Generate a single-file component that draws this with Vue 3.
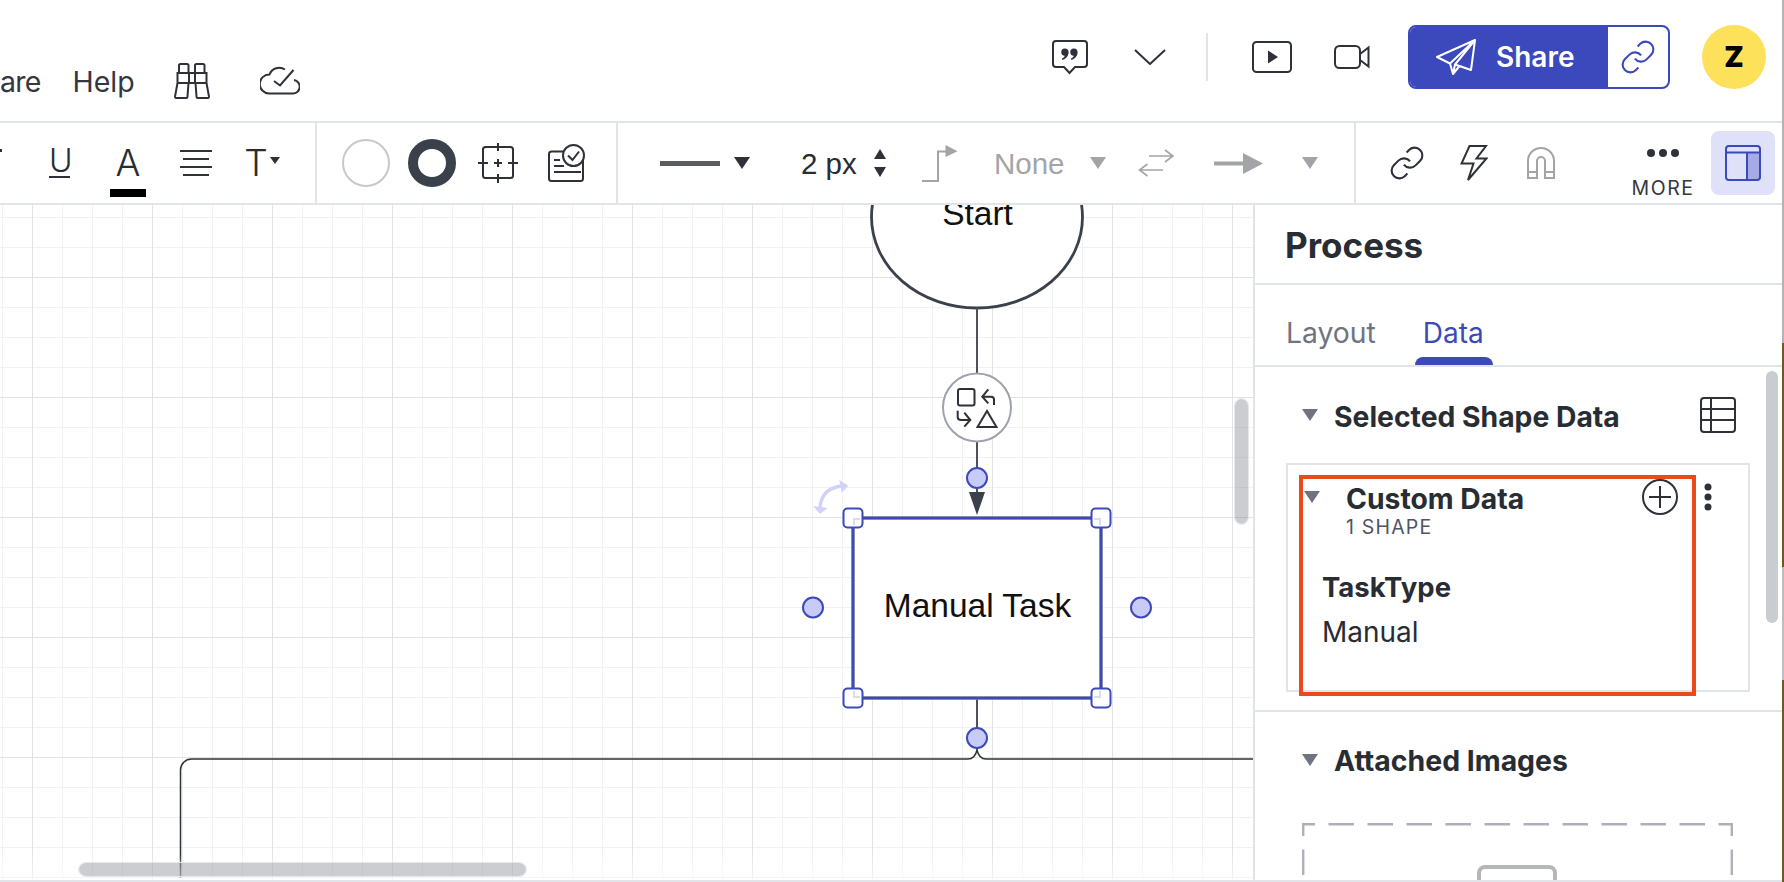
<template>
  <div class="app">
    <div class="content">
      <header class="topbar">
        <nav class="menu">
          <span class="menu-item cut">are</span>
          <span class="menu-item help">Help</span>
          <svg class="binoculars" width="36" height="36" viewBox="0 0 36 36">
            <path d="M5 10V2.500A1.500 1.500 0 0 1 6.500 1H13a1.500 1.500 0 0 1 1.500 1.500V10M21 10V2.500A1.500 1.500 0 0 1 22.500 1H29a1.500 1.500 0 0 1 1.500 1.500V10M3.500 10H32.500V20H3.500ZM15 10V20M21 10V20M3.500 20L1 33.500A1.500 1.500 0 0 0 2.500 35H12a1.500 1.500 0 0 0 1.500-1.500L14.500 20M21.500 20L22.500 33.500A1.500 1.500 0 0 0 24 35H33.500A1.500 1.500 0 0 0 35 33.500L32.500 20" />
          </svg>
          <svg class="cloud" width="40" height="29" viewBox="0 0 40 29">
            <path d="M25 3.500A10.500 10.500 0 0 0 9.500 8.500A9.200 9.200 0 0 0 9 27.500H32.500A6.800 6.800 0 0 0 34 14M14 15L20 19.500L33.500 4" />
          </svg>
        </nav>
        <div class="actions">
          <svg class="comment" width="36" height="35" viewBox="0 0 36 35">
            <path class="line" d="M4 1H32a3 3 0 0 1 3 3V24a3 3 0 0 1-3 3H23L17.500 33L12 27H4a3 3 0 0 1-3-3V4a3 3 0 0 1 3-3Z" />
            <path class="solid" d="M13 8.500a3.600 3.600 0 0 1 3.600 3.800c0 3.600-2.600 6.500-6.200 7.700l-.6-1.200c1.800-.9 2.800-2 3-3a3.600 3.600 0 0 1 .2-7.300ZM22 8.500a3.600 3.600 0 0 1 3.600 3.800c0 3.600-2.600 6.500-6.200 7.700l-.6-1.200c1.800-.9 2.800-2 3-3a3.600 3.600 0 0 1 .2-7.300Z" />
          </svg>
          <svg class="chevron" width="32" height="16" viewBox="0 0 32 16">
            <path class="line" d="M1 1L16 15L31 1" />
          </svg>
          <span class="divider"></span>
          <svg class="play" width="40" height="32" viewBox="0 0 40 32">
            <rect class="line" x="1" y="1" width="38" height="30" rx="3.500" />
            <path class="solid" d="M16 9.500L26 16L16 22.500Z" />
          </svg>
          <svg class="video" width="36" height="24" viewBox="0 0 36 24">
            <rect class="line" x="1" y="1" width="25" height="22" rx="4.500" />
            <path class="line" d="M26 9L34.500 2.500V21.500L26 15" />
          </svg>
          <div class="share">
            <div class="share-main">
              <svg width="40" height="36" viewBox="0 0 40 36">
                <path d="M39 1L1 18L14 24.500L17 35L23.500 27L35 31ZM39 1L14 24.500M39 1L19 25.500L35 31M19 25.500L17 35" />
              </svg>
              <span>Share</span>
            </div>
            <div class="share-link">
              <svg width="34" height="34" viewBox="1 1 22 22">
                <path :d="linkPath" />
              </svg>
            </div>
          </div>
          <div class="avatar">Z</div>
        </div>
      </header>

      <div class="toolbar">
        <div class="tool-group text-group">
          <span class="stub"></span>
          <span class="glyph-u">U</span>
          <div class="font-color">
            <span class="glyph-a">A</span>
            <span class="color-bar"></span>
          </div>
          <svg class="align" width="32" height="26" viewBox="0 0 32 26">
            <path class="line" d="M0 1H32M3 9H29M0 17H32M3 25H29" />
          </svg>
          <span class="glyph-t">T</span>
          <span class="caret-small"></span>
        </div>
        <div class="tool-group shape-group">
          <span class="fill-swatch"></span>
          <span class="stroke-swatch"></span>
          <svg class="target" width="40" height="40" viewBox="0 0 40 40">
            <rect class="line" x="5" y="4" width="30" height="31" rx="2.500" />
            <path class="line" d="M20 0V8M20 31V40M0 20H10M30 20H40M16 20H24M20 16V24" />
          </svg>
          <svg class="checklist" width="38" height="38" viewBox="0 0 38 38">
            <rect class="line" x="1" y="7.500" width="34" height="29.500" rx="2.500" />
            <path class="line" d="M6 16H12M6 22H16M6 28H33" />
            <circle class="line white" cx="25.500" cy="11.500" r="10.500" />
            <path class="line" d="M20 11.500L24.500 16L31 7.500" />
          </svg>
        </div>
        <div class="tool-group line-group">
          <span class="line-sample"></span>
          <span class="caret dark"></span>
          <span class="size-value">2 px</span>
          <div class="stepper">
            <span class="step-up"></span>
            <span class="step-down"></span>
          </div>
          <svg class="elbow" width="36" height="37" viewBox="0 0 36 37">
            <path class="muted-line" d="M0 36H16V6.500H24" />
            <path class="muted-fill" d="M23.500 0L35.500 6.300L23.500 12Z" />
          </svg>
          <span class="none-value">None</span>
          <span class="caret none-caret"></span>
          <svg class="swap" width="36" height="28" viewBox="0 0 36 28">
            <path class="muted-line thin" d="M11 7H35M27 1L35 7L27 13M25 21H1.500M9.500 15L1.500 21L9.500 27" />
          </svg>
          <svg class="arrow" width="50" height="21" viewBox="0 0 50 21">
            <path class="muted-fill" d="M0 8.500H29V0L49 10.500L29 21V12.500H0Z" />
          </svg>
          <span class="caret arrow-caret"></span>
        </div>
        <div class="tool-group extra-group">
          <svg class="link-tool" width="34" height="34" viewBox="1 1 22 22">
            <path class="link-line" :d="linkPath" />
          </svg>
          <svg class="bolt" width="28" height="37" viewBox="0 0 28 37">
            <path class="line" d="M9.500 1H26L16.500 13.500H26.500L8 35L13.500 18.500H1.500Z" />
          </svg>
          <svg class="magnet" width="28" height="32" viewBox="0 0 28 32">
            <path class="muted-line" d="M1 31V14A13 13 0 0 1 27 14V31H18V14A4 4 0 0 0 10 14V31ZM1 25H10M18 25H27" />
          </svg>
          <div class="more">
            <svg width="32" height="8" viewBox="0 0 32 8">
              <circle class="solid" cx="4" cy="4" r="4" />
              <circle class="solid" cx="16" cy="4" r="4" />
              <circle class="solid" cx="28" cy="4" r="4" />
            </svg>
            <span>MORE</span>
          </div>
          <div class="panel-toggle">
            <svg width="36" height="36" viewBox="0 0 36 36">
              <path class="panel-fill" d="M22 7H35V33a2 2 0 0 1-2 2H22Z" />
              <rect class="panel-line" x="1" y="1" width="34" height="34" rx="3" />
              <path class="panel-line" d="M1 7.500H35M22 7.500V35" />
            </svg>
          </div>
        </div>
      </div>

      <main class="workspace">
        <section class="canvas">
          <svg class="diagram" width="1253" height="675" viewBox="0 205 1253 675">
            <path class="connector" d="M180.500 878V770A11 11 0 0 1 191.500 759H968Q975 759 977 750Q979 759 986 759H1253" />
            <ellipse class="shape-outline" cx="977" cy="217" rx="105.500" ry="91" />
            <text class="shape-text" x="977.500" y="225">Start</text>
            <path class="stem" d="M977 308V373M977 442V492M977 698V750" />
            <path class="arrow-head" d="M969 492H985L977 515Z" />
            <circle class="swap-circle" cx="977" cy="407.500" r="34" />
            <rect class="swap-icon" x="958" y="389" width="16.500" height="16.500" rx="2" />
            <path class="swap-icon" d="M994 405V399.500Q994 396.700 991 396.700H983M988.300 389.300L982.300 396.700L988.300 403.300M957.700 410.700V417Q957.700 420 961 420H969.500M964.300 412.700L970.300 420L964.300 426.700M987 411L996.500 427H977.500Z" />
            <rect class="task-box" x="853" y="518" width="248" height="180" />
            <rect class="task-select" x="853" y="518" width="248" height="180" />
            <text class="shape-text" x="977.500" y="616.500">Manual Task</text>
            <path class="rotate-arc" d="M820 507Q822 488 842 486" />
            <path class="rotate-head" d="M813 506L827.700 508L820 514ZM839.300 480L848.300 485.700L841.700 492.700Z" />
            <g v-for="h in handles" :key="h.x + '-' + h.y">
              <rect class="handle" :x="h.x - 9.500" :y="h.y - 9.500" width="19" height="19" rx="4" />
              <path class="handle-corner" :d="cornerPath(h)" />
            </g>
            <circle v-for="p in ports" :key="p.x + '-' + p.y" class="port" :cx="p.x" :cy="p.y" r="10" />
          </svg>
          <div class="canvas-fade"></div>
          <div class="scroll-v"></div>
          <div class="scroll-h"></div>
        </section>

        <aside class="sidebar">
          <h1 class="panel-title">Process</h1>
          <div class="tabs">
            <span class="tab">Layout</span>
            <span class="tab active">Data</span>
          </div>
          <div class="panel-body">
            <section class="shape-data">
              <div class="section-head">
                <span class="disclosure"></span>
                <h2>Selected Shape Data</h2>
                <svg class="table-icon" width="36" height="36" viewBox="0 0 36 36">
                  <rect class="line" x="1" y="1" width="34" height="34" rx="3" />
                  <path class="line" d="M1 12H35M1 23H35M11 1V35" />
                </svg>
              </div>
              <div class="data-card">
                <div class="card-head">
                  <span class="disclosure"></span>
                  <div class="card-title">
                    <strong>Custom Data</strong>
                    <small>1 SHAPE</small>
                  </div>
                  <svg class="add-icon" width="36" height="36" viewBox="0 0 36 36">
                    <circle class="line" cx="18" cy="18" r="17" />
                    <path class="line" d="M18 7V29M7 18H29" />
                  </svg>
                  <svg class="kebab" width="8" height="28" viewBox="0 0 8 28">
                    <circle class="solid" cx="4" cy="4" r="3.500" />
                    <circle class="solid" cx="4" cy="14" r="3.500" />
                    <circle class="solid" cx="4" cy="24" r="3.500" />
                  </svg>
                </div>
                <div class="field-name">TaskType</div>
                <div class="field-value">Manual</div>
                <div class="callout"></div>
              </div>
            </section>
            <section class="images">
              <div class="section-head">
                <span class="disclosure"></span>
                <h2>Attached Images</h2>
              </div>
              <div class="dropzone">
                <svg class="dash" width="431" height="60" viewBox="0 0 431 60">
                  <path d="M0 1.200H431M1.200 0V60M429.800 0V60" />
                </svg>
                <div class="image-icon"></div>
              </div>
            </section>
            <div class="scroll-panel"></div>
          </div>
        </aside>
      </main>
    </div>
    <div class="window-edge"></div>
  </div>
</template>

<script setup>
const linkPath =
  'M10 13a5 5 0 0 0 7.540.540l3-3a5 5 0 0 0-7.070-7.070l-1.720 1.710M14 11a5 5 0 0 0-7.540-.540l-3 3a5 5 0 0 0 7.070 7.070l1.710-1.710'

const handles = [
  { x: 853, y: 518, sx: 1, sy: 1 },
  { x: 1101, y: 518, sx: -1, sy: 1 },
  { x: 853, y: 698, sx: 1, sy: -1 },
  { x: 1101, y: 698, sx: -1, sy: -1 },
]

const ports = [
  { x: 977, y: 478 },
  { x: 813, y: 607.5 },
  { x: 1141, y: 607.5 },
  { x: 977, y: 738 },
]

// the grey corner of the shape that shows through each handle
const cornerPath = (h) => {
  const x = h.x + h.sx
  const y = h.y + h.sy
  return `M${x + h.sx * 6} ${y}H${x}V${y + h.sy * 6}`
}
</script>

<style>
html,
body {
  margin: 0;
  background: #fff;
}
</style>

<style scoped>
.app {
  width: 1784px;
  height: 882px;
  overflow: hidden;
  display: flex;
  font-family: Inter, "Liberation Sans", sans-serif;
  color: #282c33;
  background: #fff;
}
.content {
  width: 1782px;
  flex: none;
  display: flex;
  flex-direction: column;
}
.window-edge {
  flex: 1;
  background: linear-gradient(
    to bottom,
    #b4b4b4 0,
    #b4b4b4 343px,
    #6f5a1e 343px,
    #6f5a1e 567px,
    #bdbdbd 567px,
    #bdbdbd 680px,
    #6f5a1e 680px,
    #6f5a1e 882px
  );
}

svg {
  display: block;
  flex: none;
  fill: none;
}
.line {
  fill: none;
  stroke: #2e3138;
  stroke-width: 2;
}
.line.white {
  fill: #fff;
}
.solid {
  fill: #2e3138;
}
.muted-line {
  fill: none;
  stroke: #a3a4a8;
  stroke-width: 2;
}
.muted-line.thin {
  stroke-width: 1.6;
}
.muted-fill {
  fill: #a3a4a8;
}
.link-line {
  fill: none;
  stroke: #2e3138;
  stroke-width: 1.350;
}

/* top bar */
.topbar {
  height: 121px;
  flex: none;
  display: flex;
  justify-content: space-between;
  align-items: flex-start;
  border-bottom: 2px solid #e1e4e8;
}
.menu {
  display: flex;
  align-items: center;
  height: 38px;
  margin-top: 62px;
}
.menu-item {
  font-size: 28.500px;
  line-height: 38px;
  margin-top: 2px;
  color: #33373e;
}
.cut {
  letter-spacing: -0.8px;
}
.help {
  margin-left: 32px;
}
.binoculars {
  margin-left: 39px;
}
.binoculars path,
.cloud path {
  stroke: #2e3138;
  stroke-width: 2;
}
.cloud {
  margin-left: 50px;
  margin-top: -1px;
}
.actions {
  display: flex;
  align-items: center;
  height: 64px;
  padding: 25px 16px 0 0;
}
.chevron {
  margin-left: 46px;
}
.divider {
  width: 2px;
  height: 48px;
  margin-left: 40px;
  background: #e1e4e8;
}
.play {
  margin-left: 44px;
}
.video {
  margin-left: 42px;
}
.share {
  display: flex;
  width: 262px;
  height: 64px;
  margin-left: 38px;
  box-sizing: border-box;
  border: 2px solid #3b49bd;
  border-radius: 8px;
  overflow: hidden;
}
.share-main {
  width: 198px;
  display: flex;
  align-items: center;
  padding-left: 26px;
  box-sizing: border-box;
  background: #3b49bd;
  color: #fff;
  font-size: 28px;
  font-weight: 600;
}
.share-main svg path {
  stroke: #fff;
  stroke-width: 2;
  stroke-linejoin: round;
}
.share-main span {
  margin-left: 20px;
}
.share-link {
  flex: 1;
  display: flex;
  align-items: center;
  padding-left: 13px;
}
.share-link path {
  fill: none;
  stroke: #3b49bd;
  stroke-width: 1.350;
}
.avatar {
  width: 64px;
  height: 64px;
  margin-left: 32px;
  border-radius: 50%;
  background: #fde15a;
  color: #000;
  font-size: 28px;
  font-weight: 900;
  line-height: 64px;
  text-align: center;
}

/* toolbar */
.toolbar {
  height: 80px;
  flex: none;
  display: flex;
  border-bottom: 2px solid #e1e4e8;
}
.tool-group {
  display: flex;
  align-items: center;
  box-sizing: border-box;
  border-right: 2px solid #e1e4e8;
}
.text-group {
  width: 317px;
}
.stub {
  width: 2px;
  height: 3px;
  margin-top: -25px;
  background: #2e3138;
}
.glyph-u {
  width: 21px;
  height: 30px;
  margin-left: 47px;
  box-sizing: border-box;
  border-bottom: 2px solid #2e3138;
  font-size: 32px;
  font-weight: 300;
  line-height: 26px;
  text-align: center;
}
.font-color {
  width: 36px;
  height: 48px;
  margin: 20px 0 0 40px;
  display: flex;
  flex-direction: column;
  align-items: center;
}
.glyph-a {
  height: 40px;
  font-size: 37px;
  font-weight: 300;
  line-height: 28px;
}
.color-bar {
  width: 36px;
  height: 8px;
  background: #000;
}
.align {
  margin-left: 34px;
}
.glyph-t {
  width: 24px;
  margin-left: 32px;
  font-size: 37px;
  font-weight: 300;
  line-height: 30px;
  text-align: center;
}
.caret-small {
  margin: -6px 0 0 2px;
  border-left: 5px solid transparent;
  border-right: 5px solid transparent;
  border-top: 7px solid #2e3138;
}
.shape-group {
  width: 301px;
}
.fill-swatch {
  width: 48px;
  height: 48px;
  margin-left: 25px;
  box-sizing: border-box;
  border: 2px solid #c8c8c8;
  border-radius: 50%;
}
.stroke-swatch {
  width: 48px;
  height: 48px;
  margin-left: 18px;
  box-sizing: border-box;
  border: 10px solid #3a414a;
  border-radius: 50%;
}
.target {
  margin-left: 22px;
}
.checklist {
  margin-left: 30px;
}
.line-group {
  width: 738px;
}
.line-sample {
  width: 60px;
  height: 5px;
  margin-left: 42px;
  background: #5a5c60;
}
.caret {
  width: 0;
  border-left: 8px solid transparent;
  border-right: 8px solid transparent;
  border-top: 12px solid #a3a4a8;
}
.caret.dark {
  margin-left: 14px;
  border-top-color: #2e3138;
}
.size-value {
  width: 56px;
  margin: 2px 0 0 51px;
  font-family: "Liberation Sans", Arial, sans-serif;
  font-size: 29.500px;
  white-space: nowrap;
}
.stepper {
  display: flex;
  flex-direction: column;
  gap: 8px;
  margin-left: 17px;
}
.step-up,
.step-down {
  width: 0;
  border-left: 6px solid transparent;
  border-right: 6px solid transparent;
}
.step-up {
  border-bottom: 10px solid #2e3138;
}
.step-down {
  border-top: 10px solid #2e3138;
}
.elbow {
  margin-left: 36px;
}
.none-value {
  width: 70px;
  margin: 2px 0 0 36px;
  font-family: "Liberation Sans", Arial, sans-serif;
  font-size: 29.500px;
  color: #a3a4a8;
}
.none-caret {
  margin-left: 26px;
}
.swap {
  margin-left: 32px;
}
.arrow {
  margin-left: 40px;
  filter: blur(0.6px);
}
.arrow-caret {
  margin-left: 38px;
}
.extra-group {
  flex: 1;
  border-right: 0;
}
.link-tool {
  margin-left: 34px;
}
.bolt {
  margin-left: 36px;
}
.magnet {
  margin-left: 39px;
}
.more {
  width: 60px;
  height: 49px;
  margin: 21px 0 0 78px;
  display: flex;
  flex-direction: column;
  align-items: center;
  font-size: 19.500px;
  letter-spacing: 1.500px;
  color: #33373e;
}
.more span {
  margin-top: 21px;
  line-height: 20px;
}
.panel-toggle {
  width: 64px;
  height: 64px;
  margin-left: 18px;
  display: flex;
  align-items: center;
  justify-content: center;
  border-radius: 8px;
  background: #dfe1f9;
}
.panel-line {
  fill: none;
  stroke: #3b49bd;
  stroke-width: 2;
}
.panel-fill {
  fill: #a6abe6;
}

/* canvas */
.workspace {
  flex: 1;
  display: flex;
  min-height: 0;
  border-bottom: 2px solid #e1e4e8;
}
.canvas {
  position: relative;
  width: 1253px;
  flex: none;
  overflow: hidden;
  background-color: #fff;
  background-image:
    linear-gradient(to right, #e1e2e4 1.500px, transparent 1.500px),
    linear-gradient(to bottom, #e1e2e4 1.500px, transparent 1.500px),
    linear-gradient(to right, #f0f1f2 1.500px, transparent 1.500px),
    linear-gradient(to bottom, #f0f1f2 1.500px, transparent 1.500px);
  background-size: 120px 120px, 120px 120px, 30px 30px, 30px 30px;
  background-position: 32px 0, 0 72px, 2px 0, 0 12px;
}
.diagram {
  position: absolute;
  left: 0;
  top: 0;
}
.connector {
  fill: none;
  stroke: #2e3338;
  stroke-width: 1.500;
}
.shape-outline {
  fill: #fff;
  stroke: #3a414a;
  stroke-width: 2.800;
}
.shape-text {
  fill: #111;
  font-family: "Liberation Sans", Arial, sans-serif;
  font-size: 33.500px;
  text-anchor: middle;
}
.stem {
  fill: none;
  stroke: #4d5259;
  stroke-width: 2;
}
.arrow-head {
  fill: #3a414a;
}
.swap-circle {
  fill: #fff;
  stroke: #9ea2ac;
  stroke-width: 2;
}
.swap-icon {
  fill: none;
  stroke: #2e3138;
  stroke-width: 2;
}
.task-box {
  fill: #fff;
  stroke: #80848c;
  stroke-width: 3.500;
}
.task-select {
  fill: none;
  stroke: #3b49bd;
  stroke-width: 2.400;
}
.rotate-arc {
  fill: none;
  stroke: #d1d2fb;
  stroke-width: 3.500;
}
.rotate-head {
  fill: #d1d2fb;
}
.handle {
  fill: #fff;
  stroke: #3b49bd;
  stroke-width: 2;
}
.handle-corner {
  fill: none;
  stroke: #dcdde6;
  stroke-width: 2;
}
.port {
  fill: #c9cbf7;
  stroke: #3b49bd;
  stroke-width: 2;
}
.canvas-fade {
  position: absolute;
  left: 0;
  right: 0;
  bottom: 0;
  height: 26px;
  background: linear-gradient(to bottom, rgba(255, 255, 255, 0), rgba(255, 255, 255, 0.7));
}
.scroll-v,
.scroll-h {
  position: absolute;
  box-sizing: border-box;
  border: 1.500px solid #e6e7e9;
  border-radius: 8px;
  background: rgba(110, 117, 128, 0.36);
  background-clip: padding-box;
}
.scroll-v {
  right: 4px;
  top: 193px;
  width: 15px;
  height: 127px;
}
.scroll-h {
  left: 78px;
  bottom: 3px;
  width: 449px;
  height: 15px;
}

/* right panel */
.sidebar {
  flex: 1;
  min-width: 0;
  display: flex;
  flex-direction: column;
  box-sizing: border-box;
  border-left: 2px solid #e1e4e8;
}
.panel-title {
  height: 78px;
  flex: none;
  margin: 0;
  padding-left: 30px;
  border-bottom: 2px solid #e1e4e8;
  font-size: 35px;
  font-weight: 700;
  line-height: 81px;
}
.tabs {
  position: relative;
  height: 80px;
  flex: none;
  display: flex;
  border-bottom: 2px solid #e1e4e8;
}
.tab {
  margin: 30px 0 0 31px;
  font-size: 28.300px;
  line-height: 36px;
  color: #6f7480;
}
.tab.active {
  position: relative;
  margin-left: 47px;
  font-size: 28px;
  color: #3b49bd;
}
.tab.active::after {
  content: "";
  position: absolute;
  left: -8px;
  right: -9px;
  top: 42px;
  height: 8px;
  border-radius: 8px 8px 0 0;
  background: #3b49bd;
}
.panel-body {
  position: relative;
  flex: 1;
  min-height: 0;
  overflow: hidden;
}
.shape-data {
  padding: 30px 0 18px;
  border-bottom: 2px solid #e1e4e8;
}
.section-head {
  display: flex;
  align-items: center;
  height: 36px;
  padding-left: 47px;
}
.section-head h2 {
  margin: 0 0 0 16px;
  padding-top: 3px;
  font-size: 28.300px;
  font-weight: 700;
  line-height: 36px;
}
.images .section-head h2 {
  padding-top: 1px;
  font-size: 28.400px;
}
.disclosure {
  width: 0;
  flex: none;
  border-left: 8px solid transparent;
  border-right: 8px solid transparent;
  border-top: 12px solid #6f7480;
}
.table-icon {
  margin-left: auto;
  margin-right: 46px;
}
.data-card {
  position: relative;
  width: 464px;
  height: 229px;
  margin: 30px 0 0 31px;
  box-sizing: border-box;
  border: 2px solid #e1e4e8;
}
.card-head {
  display: flex;
  align-items: flex-start;
  margin-top: 14px;
  padding: 0 36px 0 16px;
}
.card-head .disclosure {
  margin-top: 12px;
}
.card-title {
  display: flex;
  flex-direction: column;
  margin: 2px 0 0 26px;
}
.card-title strong {
  font-size: 28.300px;
  font-weight: 700;
  line-height: 36px;
}
.card-title small {
  font-size: 19.500px;
  line-height: 20px;
  letter-spacing: 1.200px;
  color: #4f5561;
}
.add-icon {
  margin-left: auto;
}
.kebab {
  margin: 4px 0 0 26px;
}
.field-name {
  margin: 32px 0 0 34px;
  font-size: 27.500px;
  font-weight: 700;
  line-height: 36px;
}
.field-value {
  margin: 9px 0 0 34px;
  font-size: 28px;
  line-height: 36px;
}
.callout {
  position: absolute;
  left: 11px;
  top: 10px;
  width: 397px;
  height: 221px;
  box-sizing: border-box;
  border: 4px solid #eb4a1f;
}
.images {
  padding-top: 30px;
}
.dropzone {
  position: relative;
  width: 431px;
  height: 60px;
  margin: 45px 0 0 47px;
}
.dash {
  position: absolute;
  left: 0;
  top: 0;
}
.dash path {
  stroke: #aeb1b9;
  stroke-width: 2.400;
  stroke-dasharray: 25.500 13.500;
  stroke-dashoffset: 12.500;
}
.image-icon {
  position: absolute;
  left: 175px;
  top: 42px;
  width: 80px;
  height: 40px;
  box-sizing: border-box;
  border: 4px solid #b4b6ba;
  border-radius: 8px;
}
.scroll-panel {
  position: absolute;
  top: 4px;
  right: 4px;
  width: 12px;
  height: 252px;
  border-radius: 6px;
  background: #c9ccd0;
}
</style>
